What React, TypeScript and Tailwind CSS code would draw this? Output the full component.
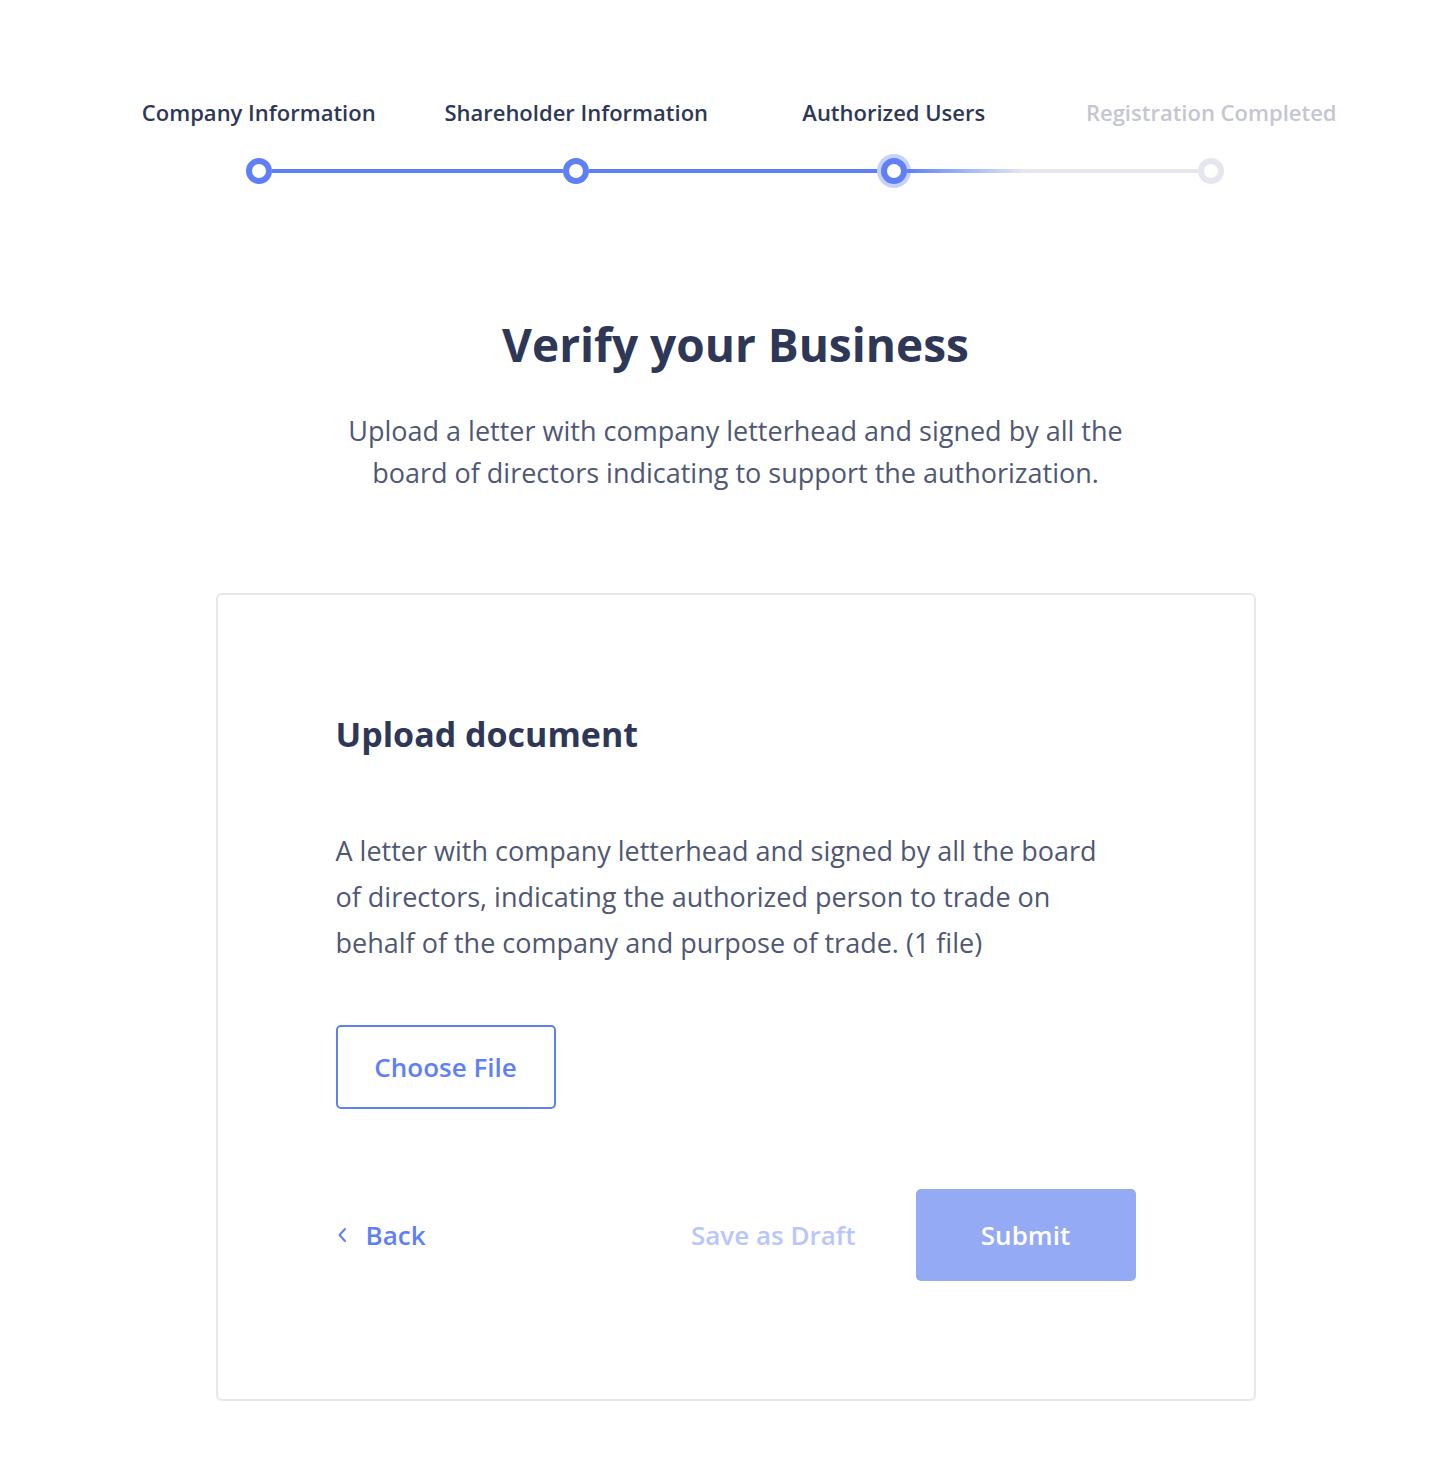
import React from 'react';

const steps = [
  { label: 'Company Information', state: 'done' },
  { label: 'Shareholder Information', state: 'done' },
  { label: 'Authorized Users', state: 'active' },
  { label: 'Registration Completed', state: 'todo' },
];

function Dot({ state }: { state: string }) {
  if (state === 'active') {
    return (
      <div className="w-[34px] h-[34px] rounded-full bg-[#c7d2fc] flex items-center justify-center shrink-0 -mx-[4px]">
        <div className="w-[26px] h-[26px] rounded-full border-[6px] border-[#5f7ff7] bg-white" />
      </div>
    );
  }
  const color = state === 'done' ? 'border-[#5f7ff7]' : 'border-[#e5e6ee]';
  return <div className={`w-[26px] h-[26px] rounded-full border-[6px] bg-white shrink-0 ${color}`} />;
}

function Stepper() {
  return (
    <div className="w-[1270px] ml-[100px]">
      <div className="grid grid-cols-4">
        {steps.map((s) => (
          <div
            key={s.label}
            className={`text-center text-[22px] font-semibold whitespace-nowrap ${s.state === 'todo' ? 'text-[#c4c6d1]' : 'text-[#2f3757]'}`}
          >
            {s.label}
          </div>
        ))}
      </div>
      <div className="flex items-center px-[146px] mt-[25px] h-[34px]">
        <Dot state="done" />
        <div className="flex-1 h-[4px] bg-[#5f7ff7]" />
        <Dot state="done" />
        <div className="flex-1 h-[4px] bg-[#5f7ff7]" />
        <Dot state="active" />
        <div className="flex-1 h-[4px] bg-gradient-to-r from-[#5f7ff7] via-[#e5e6ee] via-40% to-[#e5e6ee]" />
        <Dot state="todo" />
      </div>
    </div>
  );
}

export default function App() {
  return (
    <div className="w-[1449px] min-h-[1473px] bg-white pt-[96px] font-['Open_Sans','Noto_Sans',sans-serif]">
      <Stepper />

      <div className="ml-[22px] flex flex-col items-center">
        <h1 className="mt-[126px] text-[46px] leading-[60px] font-bold text-[#2f3757]">Verify your Business</h1>
        <p className="mt-[36px] text-center text-[27px] leading-[42px] text-[#4f5775] whitespace-nowrap">
          Upload a letter with company letterhead and signed by all the
          <br />
          board of directors indicating to support the authorization.
        </p>

        <div className="mt-[99px] w-[1040px] h-[808px] border-2 border-[#e6e7ef] rounded-[6px] px-[118px] pt-[114px]">
          <h2 className="text-[34px] leading-[50px] font-bold text-[#2f3757]">Upload document</h2>
          <p className="mt-[69px] text-[27px] leading-[46px] text-[#4f5775] whitespace-nowrap">
            A letter with company letterhead and signed by all the board
            <br />
            of directors, indicating the authorized person to trade on
            <br />
            behalf of the company and purpose of trade. (1 file)
          </p>
          <button className="mt-[59px] w-[220px] h-[84px] border-2 border-[#5f7ff7] rounded-[5px] text-[26px] font-semibold text-[#5f7ff7]">
            Choose File
          </button>

          <div className="mt-[80px] flex items-center w-[800px]">
            <button className="flex items-center gap-[18px] text-[26px] font-semibold text-[#5f7ff7]">
              <svg width="12" height="20" viewBox="0 0 12 20" fill="none">
                <path d="M9 4 L3.5 10 L9 16" stroke="#5f7ff7" strokeWidth="2" strokeLinecap="round" strokeLinejoin="round" />
              </svg>
              Back
            </button>
            <div className="flex-1" />
            <button className="text-[26px] font-semibold text-[#b9c6fb] mr-[60px]">Save as Draft</button>
            <button className="w-[220px] h-[92px] rounded-[5px] bg-[#95aaf5] text-white text-[26px] font-semibold">
              Submit
            </button>
          </div>
        </div>
      </div>
    </div>
  );
}
